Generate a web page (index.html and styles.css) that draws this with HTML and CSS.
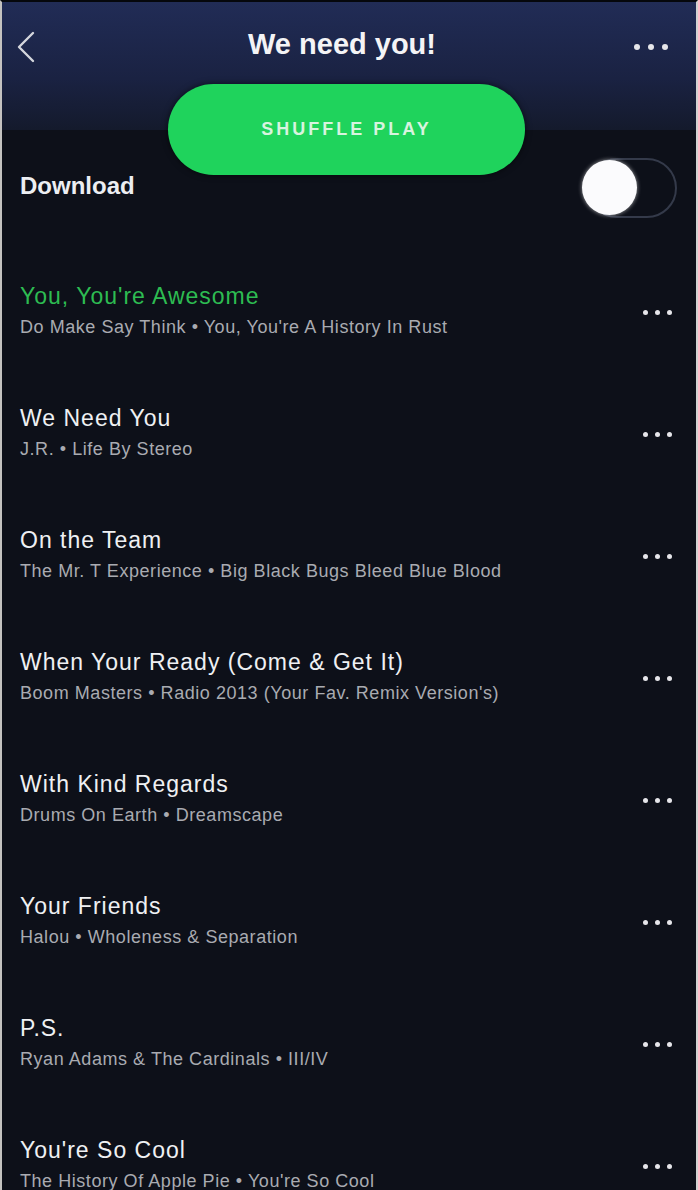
FILE: index.html
```html
<!DOCTYPE html>
<html lang="en">
<head>
  <meta charset="UTF-8">
  <title>We need you!</title>
  <link rel="stylesheet" href="styles.css">
</head>
<body>

  <div class="phone">
    <div class="hero">
      <div class="topbar">
        <svg class="back" width="20" height="32" viewBox="0 0 20 32">
          <path d="M17 2 L3 16 L17 30" fill="none" stroke="#d4d6dc" stroke-width="2.4" stroke-linecap="round" stroke-linejoin="round"/>
        </svg>
        <h1>We need you!</h1>
        <span class="dots dots-head"><i></i><i></i><i></i></span>
      </div>
      <button class="shuffle">SHUFFLE PLAY</button>
    </div>

    <div class="download">
      <span>Download</span>
      <div class="toggle"><div class="knob"></div></div>
    </div>

    <ul class="tracks">
      <li class="track playing">
        <div class="info">
          <div class="title">You, You're Awesome</div>
          <div class="sub">Do Make Say Think • You, You're A History In Rust</div>
        </div>
        <span class="dots"><i></i><i></i><i></i></span>
      </li>
      <li class="track">
        <div class="info">
          <div class="title">We Need You</div>
          <div class="sub">J.R. • Life By Stereo</div>
        </div>
        <span class="dots"><i></i><i></i><i></i></span>
      </li>
      <li class="track">
        <div class="info">
          <div class="title">On the Team</div>
          <div class="sub">The Mr. T Experience • Big Black Bugs Bleed Blue Blood</div>
        </div>
        <span class="dots"><i></i><i></i><i></i></span>
      </li>
      <li class="track">
        <div class="info">
          <div class="title">When Your Ready (Come &amp; Get It)</div>
          <div class="sub">Boom Masters • Radio 2013 (Your Fav. Remix Version's)</div>
        </div>
        <span class="dots"><i></i><i></i><i></i></span>
      </li>
      <li class="track">
        <div class="info">
          <div class="title">With Kind Regards</div>
          <div class="sub">Drums On Earth • Dreamscape</div>
        </div>
        <span class="dots"><i></i><i></i><i></i></span>
      </li>
      <li class="track">
        <div class="info">
          <div class="title">Your Friends</div>
          <div class="sub">Halou • Wholeness &amp; Separation</div>
        </div>
        <span class="dots"><i></i><i></i><i></i></span>
      </li>
      <li class="track">
        <div class="info">
          <div class="title">P.S.</div>
          <div class="sub">Ryan Adams &amp; The Cardinals • III/IV</div>
        </div>
        <span class="dots"><i></i><i></i><i></i></span>
      </li>
      <li class="track">
        <div class="info">
          <div class="title">You're So Cool</div>
          <div class="sub">The History Of Apple Pie • You're So Cool</div>
        </div>
        <span class="dots"><i></i><i></i><i></i></span>
      </li>
    </ul>
  </div>

</body>
</html>
```

FILE: styles.css
```css
body {
  margin: 0;
  height: 1190px;
  overflow: hidden;
  background: #0d1019;
  font-family: "Liberation Sans", Arial, sans-serif;
}
.phone {
  height: 1190px;
  background: #0d1019;
  border-left: 2px solid #c4c2c0;
  border-right: 2px solid #d2d2d2;
  border-top: 2px solid #05070c;
  box-sizing: border-box;
  overflow: hidden;
}
.hero {
  background: linear-gradient(#212c56, #1a2242 60%, #141a2c) no-repeat;
  background-size: 100% 128px;
}
.topbar {
  height: 82px;
  display: flex;
  align-items: center;
  justify-content: space-between;
  padding: 0 28px 0 14px;
}
.back {
  display: block;
  margin-top: 8px;
}
.topbar h1 {
  margin: 2px 0 0 14px;
  font-size: 29px;
  font-weight: bold;
  color: #f4f4f6;
}
.dots {
  display: flex;
  gap: 7px;
}
.dots i {
  display: block;
  width: 5px;
  height: 5px;
  border-radius: 50%;
  background: #e6e6ea;
}
.dots-head {
  gap: 8px;
  margin-top: 8px;
}
.dots-head i {
  width: 6px;
  height: 6px;
}
.shuffle {
  display: block;
  width: 357px;
  height: 91px;
  margin: 0 auto 0 166px;
  border: none;
  border-radius: 46px;
  background: #1fd35c;
  color: #d8f3df;
  font-family: "Liberation Sans", Arial, sans-serif;
  font-size: 18px;
  font-weight: bold;
  letter-spacing: 3px;
  box-shadow: 0 0 6px rgba(0, 0, 0, 0.6);
}
.download {
  display: flex;
  align-items: center;
  justify-content: space-between;
  height: 58px;
  margin-top: -16px;
  padding: 0 19px 0 18px;
  color: #eceef2;
  font-size: 24px;
  font-weight: bold;
}
.download span {
  margin-top: -5px;
}
.toggle {
  position: relative;
  width: 86px;
  height: 56px;
  border: 2px solid #343a4a;
  border-radius: 30px;
}
.knob {
  position: absolute;
  left: -7px;
  top: 0;
  width: 55px;
  height: 55px;
  border-radius: 50%;
  background: #fbfbfd;
  box-shadow: 0 0 4px rgba(255, 255, 255, 0.6);
}
.tracks {
  list-style: none;
  margin: 32px 0 0;
  padding: 0;
}
.track {
  display: flex;
  align-items: center;
  justify-content: space-between;
  height: 56px;
  padding: 33px 24px 33px 18px;
}
.title {
  font-size: 23px;
  line-height: 28px;
  letter-spacing: 1px;
  color: #eff0f3;
}
.playing .title {
  color: #2dbc52;
}
.sub {
  margin-top: 6px;
  font-size: 18px;
  line-height: 22px;
  letter-spacing: 0.55px;
  color: #a9abb1;
}
.track .dots {
  margin-top: 4px;
}
```
